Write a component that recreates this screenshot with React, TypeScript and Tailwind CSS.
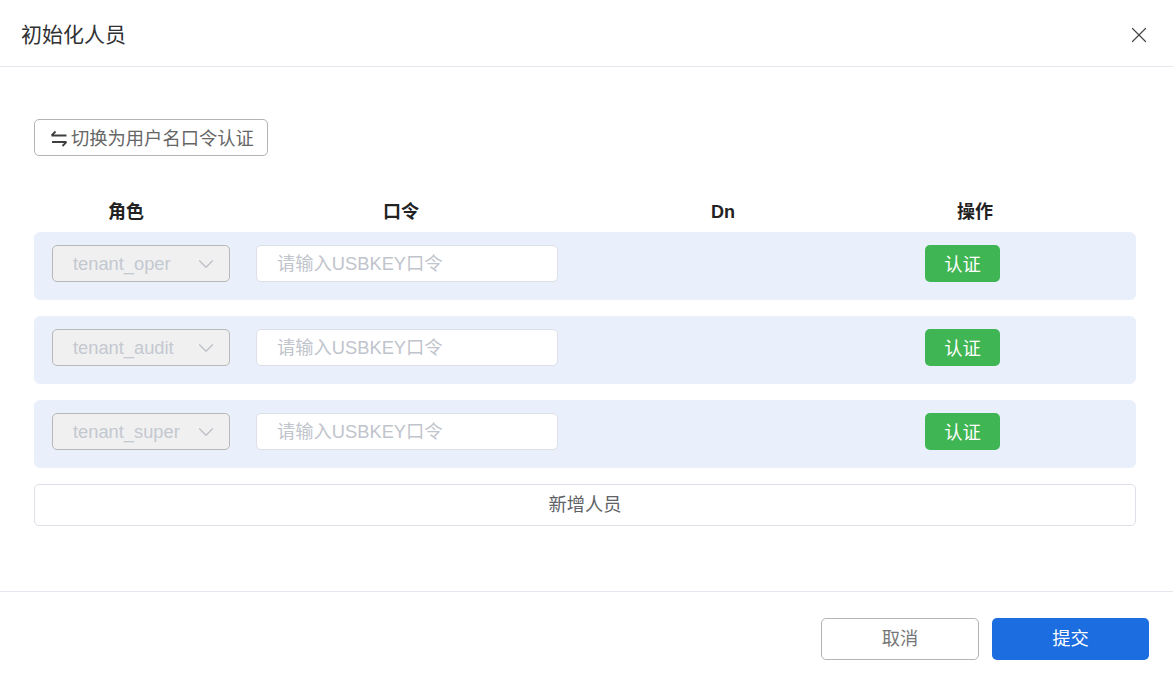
import { ChevronDown, X } from "lucide-react";

const roles = ["tenant_oper", "tenant_audit", "tenant_super"];

function SwitchIcon() {
  return (
    <svg width="16" height="17" viewBox="0 0 16 17" fill="none" stroke="#3f3f3f" strokeWidth="1.8">
      <path d="M0.5 5.5h15M0.5 5.5l4-4" />
      <path d="M15.5 12H1M15.5 12l-4 4" />
    </svg>
  );
}

function PersonRow({ role }: { role: string }) {
  return (
    <div className="flex h-[68px] items-start rounded-md bg-[#e9f0fb] pl-[18px] pt-[13px]">
      <div className="flex h-[37px] w-[178px] items-center justify-between rounded-[5px] border border-[#b8b8b8] bg-[#f0f0f0] pl-5 pr-[10px] text-[18.3px] text-[#c4c8d0]">
        <span>{role}</span>
        <ChevronDown className="h-[26px] w-[26px] text-[#b8bcc4]" strokeWidth={1} />
      </div>
      <div className="ml-[26px] flex h-[37px] w-[302px] items-center rounded-[5px] border border-[#dcdfe6] bg-white pl-5 pt-[1px] text-[18.3px] text-[#c0c4cc]">
        请输入USBKEY口令
      </div>
      <button className="ml-[367px] h-[37px] w-[75px] rounded-[5px] bg-[#3fb553] pt-[3px] text-[18.3px] text-white">
        认证
      </button>
    </div>
  );
}

export default function App() {
  return (
    <div className="flex h-[684px] w-[1173px] flex-col bg-white font-['Liberation_Sans','Noto_Sans_CJK_SC',sans-serif] text-[#606266]">
      <header className="flex h-[67px] shrink-0 items-center justify-between border-b border-[#e6e6ee] pl-[21px] pr-[21px] pt-[4px]">
        <h1 className="text-[21px] font-normal text-[#303133]">初始化人员</h1>
        <X className="h-[26px] w-[26px] text-[#444]" strokeWidth={1.1} />
      </header>

      <main className="flex-1 pl-[34px] pr-[37px] pt-[52px]">
        <button className="flex h-[37px] w-[234px] items-center gap-[4px] rounded-[5px] border border-[#b4b4b4] bg-white pl-[16px] pt-[2px] text-[18.3px] text-[#666]">
          <SwitchIcon />
          切换为用户名口令认证
        </button>

        <div className="mt-[41px] grid h-[35px] grid-cols-[184px_366px_278px_226px] items-center pb-[5px] text-center text-[18px] font-bold text-[#222]">
          <span>角色</span>
          <span>口令</span>
          <span>Dn</span>
          <span>操作</span>
        </div>

        <div className="flex flex-col gap-4">
          {roles.map((role) => (
            <PersonRow key={role} role={role} />
          ))}
          <button className="h-[42px] rounded-[5px] border border-[#dcdfe6] bg-white text-[18.3px] text-[#606266]">
            新增人员
          </button>
        </div>
      </main>

      <footer className="flex h-[93px] shrink-0 items-start justify-end gap-[13px] border-t border-[#e6e6ee] pr-6 pt-[26px] text-[18.3px]">
        <button className="h-[42px] w-[158px] rounded-[5px] border border-[#b4b4b4] bg-white text-[#777]">
          取消
        </button>
        <button className="h-[42px] w-[157px] rounded-[5px] bg-[#1c6de0] text-white">
          提交
        </button>
      </footer>
    </div>
  );
}
